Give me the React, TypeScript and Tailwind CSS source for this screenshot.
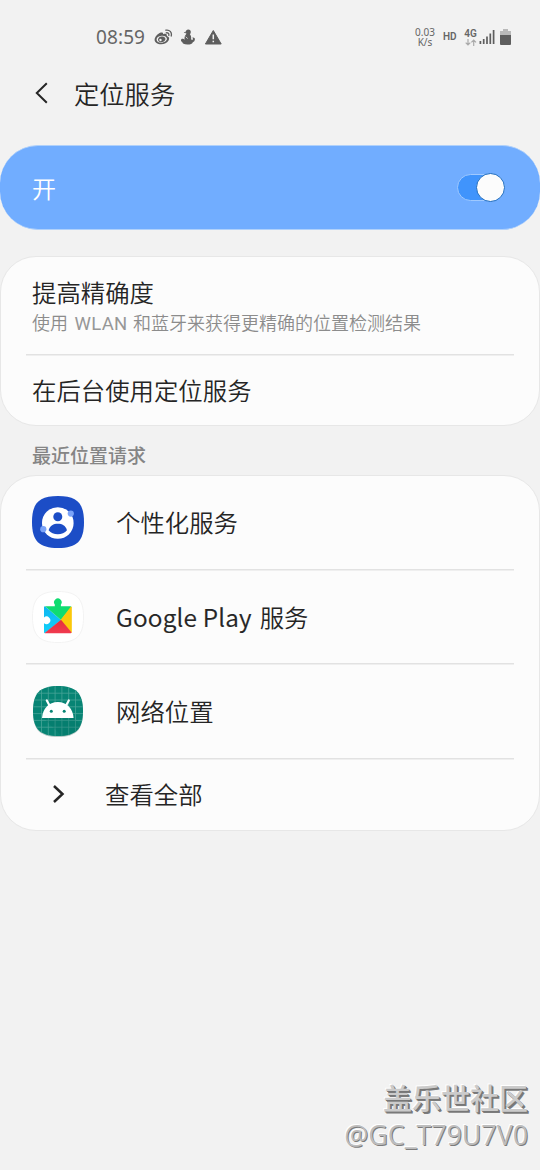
import { useState } from "react";
import type { ReactNode } from "react";

const ProfileIcon = () => (
  <svg width="52" height="52" viewBox="0 0 52 52">
    <path
      d="M26 0C45 0 52 7 52 26S45 52 26 52 0 45 0 26 7 0 26 0Z"
      fill="#1c4dc6"
    />
    <circle cx="25.800" cy="27" r="15.800" fill="#fff" />
    <circle cx="25.800" cy="20.800" r="4.500" fill="#1c4dc6" />
    <path
      d="M16.600 34.200C18.200 29.600 21.400 27.800 25.800 27.800S33.400 29.600 35 34.200C32.800 37 29.600 38.300 25.800 38.300S18.800 37 16.600 34.200Z"
      fill="#1c4dc6"
    />
    <circle cx="38.800" cy="17.600" r="3.100" fill="#7ba3f8" />
    <circle cx="11.300" cy="33.200" r="3.100" fill="#7ba3f8" />
  </svg>
);

const PlayServicesIcon = () => (
  <svg width="52" height="52" viewBox="0 0 52 52">
    <defs>
      <linearGradient id="playBlue" x1="0" y1="0" x2="0" y2="1">
        <stop offset="0" stopColor="#0fb5f0" />
        <stop offset="1" stopColor="#10d2fa" />
      </linearGradient>
      <linearGradient id="playRed" x1="0" y1="0" x2="0" y2="1">
        <stop offset="0" stopColor="#e32d3c" />
        <stop offset="1" stopColor="#f13b50" />
      </linearGradient>
    </defs>
    <path
      d="M26 .5C44.500 .5 51.500 7.500 51.500 26S44.500 51.500 26 51.500 .5 44.500 .5 26 7.500 .5 26 .5Z"
      fill="#fff"
      stroke="#f3f3f3"
    />
    <path
      d="M13 15.300L29 29L13 42.300Q12 42.300 12 41.300V32.200A3.800 3.800 0 1 0 12 26.400V16.300Q12 15.300 13 15.300Z"
      fill="url(#playBlue)"
    />
    <path
      d="M13 15.300H22.800V13.500A3.800 3.800 0 1 1 28.900 13.500V15.300H38.600L39.400 16L29 29Z"
      fill="#0fdc70"
    />
    <path d="M39 15.500Q39.800 15.700 39.800 16.300V41.300L39 42L28.500 29Z" fill="#fbc80a" />
    <path d="M29 28.800L39.600 41.600Q39.300 42.300 38.600 42.300H13.100L12.700 42Z" fill="url(#playRed)" />
  </svg>
);

const AndroidIcon = () => (
  <svg width="52" height="52" viewBox="0 0 52 52">
    <defs>
      <clipPath id="androidClip">
        <path d="M26 1C44 1 51 8 51 26S44 51 26 51 1 44 1 26 8 1 26 1Z" />
      </clipPath>
    </defs>
    <path
      d="M26 2C44 2 51 9 51 27S44 52 26 52 1 45 1 27 8 2 26 2Z"
      fill="#b7cbc8"
    />
    <g clipPath="url(#androidClip)">
      <rect width="52" height="52" fill="#078474" />
      <path
        d="M9.500 0V52M16.300 0V52M23.100 0V52M29.900 0V52M36.700 0V52M43.500 0V52M0 8.200H52M0 15H52M0 21.800H52M0 28.600H52M0 35.400H52M0 42.200H52"
        stroke="#48a598"
        strokeWidth=".8"
      />
      <path d="M11 32.500H41L50 42V52H31Z" fill="#006b5e" opacity=".25" />
    </g>
    <path
      d="M17.800 21L14.800 15.400M33.800 21L36.800 15.400"
      fill="none"
      stroke="#fff"
      strokeWidth="2.200"
      strokeLinecap="round"
    />
    <path
      d="M10 32.900C10.700 23.500 16.800 17 25.800 17S40.900 23.500 41.600 32.900Z"
      fill="#fff"
    />
    <circle cx="19.300" cy="26.200" r="1.500" fill="#078474" />
    <circle cx="32.200" cy="26.200" r="1.500" fill="#078474" />
  </svg>
);

const StatusBar = () => (
  <div className="flex h-[74px] items-center font-normal text-[#666]">
    <span className="ml-24 w-[50px] font-['Noto_Sans'] text-[19px] leading-[26px] tracking-[0.1px]">
      08:59
    </span>
    {/* Weibo */}
    <svg className="ml-2" width="19" height="17" viewBox="0 0 19 17" fill="none">
      <path
        fillRule="evenodd"
        d="M6.800 3.600C8.300 3 9.400 3.700 9 5.200C11.500 4.300 13.400 5 12.800 7.100C15 7.800 15.700 9.300 14.700 11.300C13.300 13.900 10.400 15.300 7.100 15.300C3.300 15.300.6 13.400.6 10.800C.6 8.200 3.700 4.700 6.800 3.600ZM7.500 6.700C4.500 7 2.400 8.600 2.600 10.700S5.100 14 8 13.700S13.100 11.600 12.900 9.600S10.300 6.400 7.500 6.700Z"
        fill="#5e5e5e"
      />
      <path
        fillRule="evenodd"
        d="M7.500 7.500C10.300 7.200 11.800 8.700 11.400 10.500S8.500 13.600 6.500 13.200S3.500 11.200 4.200 9.700S6.200 7.700 7.500 7.500ZM6.400 9.800A1.200 1.200 0 1 0 6.500 12.200A1.200 1.200 0 0 0 6.400 9.800Z"
        fill="#5e5e5e"
      />
      <path
        d="M11.800 1.200C15.500.5 18.200 3.200 17.200 7M12.200 3.800C14 3.500 15.200 4.700 14.800 6.300"
        stroke="#5e5e5e"
        strokeWidth="1.300"
        strokeLinecap="round"
      />
    </svg>
    <svg className="ml-[7px]" width="16" height="17" viewBox="0 0 16 17" fill="#5e5e5e">
      <circle cx="8.300" cy="3" r="2.500" />
      <path d="M5.600 2.600L3.700 3.700L6 4.300ZM6.300 5H9.800C11 6.500 11.400 8 11.100 10.300C12 11.400 12.700 11.100 13 9.700L12.300 8.800C13.300 7.900 15 8.700 14.900 10.300C14.800 12 14 12.800 12.800 13.300C12.500 15 10.500 15.600 7.400 15.600C4 15.600 2.200 14.700 2.300 13.100C.8 12.500.6 10.900 1.500 10C2.700 9.200 3.800 9.800 4.700 10.800C4 8.700 4.800 6.700 6.300 5Z" />
      <path d="M5.800 7.700L7.600 9.600" stroke="#f2f2f2" strokeWidth=".8" />
    </svg>
    <svg className="ml-2" width="19" height="17" viewBox="0 0 19 17">
      <path d="M9.300 1.500L17.200 15H1.400Z" fill="#5e5e5e" stroke="#5e5e5e" strokeLinejoin="round" />
      <path d="M9.300 5.500V10.300M9.300 11.700V13.300" stroke="#f2f2f2" strokeWidth="1.500" />
    </svg>

    <div className="ml-auto w-[22px] text-center font-['Noto_Sans'] text-[10px] leading-[10px]">
      <div>0.03</div>
      <div>K/s</div>
    </div>
    <span className="ml-[7px] w-[14px] font-['Roboto'] text-[10px] leading-3 font-semibold">
      HD
    </span>
    <div className="ml-[7px] flex w-[13px] flex-col items-center">
      <span className="font-['Roboto'] text-[10px] leading-[10px] font-semibold">4G</span>
      <svg width="12" height="7" viewBox="0 0 12 7" fill="none" stroke="#aaa" strokeWidth="1.200">
        <path d="M3 0V6M.7 3.700L3 6L5.300 3.700M8.700 7V1M6.400 3.300L8.700 1L11 3.300" />
      </svg>
    </div>
    <svg className="ml-[2px]" width="16" height="16" viewBox="0 0 16 16" stroke="#5e5e5e" strokeWidth="1.700">
      <path d="M1.400 15V12M4.700 15V10M8 15V7.500M11.300 15V4.500M14.600 15V1" />
    </svg>
    <svg className="mr-[29px] ml-[5px]" width="11" height="16" viewBox="0 0 11 16">
      <path d="M3 0H8V2H11V7H0V2H3Z" fill="#b9b9b9" />
      <path d="M0 6H11V15Q11 16 10 16H1Q0 16 0 15Z" fill="#5e5e5e" />
    </svg>
  </div>
);

const Divider = () => (
  <div className="mx-[25px] h-[2px] shrink-0 border-t border-[#e2e2e2] bg-[#efefef]" />
);

interface AppRowProps {
  icon: ReactNode;
  name: ReactNode;
}

const AppRow = ({ icon, name }: AppRowProps) => (
  <div className="flex h-[92.500px] items-center pl-[31px]">
    {icon}
    <span className="ml-8 text-[24.400px] leading-9">{name}</span>
  </div>
);

export default function App() {
  const [enabled, setEnabled] = useState(true);

  return (
    <div className="flex h-[1170px] w-[540px] flex-col overflow-hidden bg-[#f2f2f2] font-['Noto_Sans_CJK_SC',sans-serif] font-[350] text-[#252525]">
      <StatusBar />

      {/* Title */}
      <div className="flex h-[38px] items-center">
        <svg className="ml-[34px]" width="15" height="22" viewBox="0 0 15 22">
          <path d="M12.800 1.300L2.800 11L12.800 20.700" fill="none" stroke="#252525" strokeWidth="2" />
        </svg>
        <h1 className="ml-[25px] pb-px text-[25.300px] leading-[38px]">定位服务</h1>
      </div>

      {/* Main switch */}
      <div className="mt-[33px] flex h-[85px] shrink-0 items-center rounded-[38px] border-y border-[#b0d1fb] bg-[#71adff] pr-[35px] pl-8">
        <span className="text-[24px] leading-9 text-white">开</span>
        <button
          className="ml-auto flex h-[27px] w-[48px] items-center justify-end rounded-full border border-[#9fc9ff] bg-[#4094fc]"
          onClick={() => setEnabled(!enabled)}
        >
          <span className="-mr-px h-[29px] w-[29px] shrink-0 rounded-full border border-[#1b6bc0] bg-[#fcfcfc]" />
        </button>
      </div>

      <div className="mt-[26px] h-[170px] shrink-0 rounded-[36px] border border-[#e7e7e7] bg-[#fcfcfc]">
        <div className="flex h-[97px] flex-col pt-[17px] pl-[31px]">
          <span className="text-[24.400px] leading-9">提高精确度</span>
          <span className="text-[18px] leading-[25px] whitespace-nowrap text-[#8c8c8c]">
            使用
            <span className="mr-1 ml-[5px] inline-block w-[56px] text-center font-['Roboto'] text-[18.500px] font-normal tracking-[0.300px] text-[#979797]">
              WLAN
            </span>
            和蓝牙来获得更精确的位置检测结果
          </span>
        </div>
        <Divider />
        <div className="flex h-[69px] items-center pb-px pl-[31px]">
          <span className="text-[24.400px] leading-9">在后台使用定位服务</span>
        </div>
      </div>

      <h2 className="h-[49px] shrink-0 pt-[15px] pl-8 text-[19px] leading-7 font-medium text-[#858585]">
        最近位置请求
      </h2>

      <div className="h-[356px] shrink-0 rounded-[36px] border border-[#e7e7e7] bg-[#fcfcfc]">
        <AppRow icon={<ProfileIcon />} name="个性化服务" />
        <Divider />
        <AppRow
          icon={<PlayServicesIcon />}
          name={
            <>
              <span className="mr-2 tracking-[0.200px] [-webkit-text-stroke:0.2px_#252525]">
                Google Play
              </span>
              服务
            </>
          }
        />
        <Divider />
        <AppRow icon={<AndroidIcon />} name="网络位置" />
        <Divider />
        <div className="flex h-[70px] items-center pb-px">
          <svg className="ml-[51px]" width="13" height="20" viewBox="0 0 13 20">
            <path d="M2 2L10.500 10L2 18" fill="none" stroke="#252525" strokeWidth="2.500" />
          </svg>
          <span className="ml-10 text-[24.400px] leading-9">查看全部</span>
        </div>
      </div>

      <div className="mt-auto mr-[12px] flex flex-col items-end pb-[17px] [text-shadow:1px_1px_0_#7c7c7c,-1px_-1px_0_#fff]">
        <span className="text-[29px] leading-[40px] font-medium text-[#cbcbcb] [text-shadow:1px_1px_0_#777,2px_2px_0_#7c7c7c,-1px_-1px_0_#fff]">
          盖乐世社区
        </span>
        <span className="font-['Open_Sans'] text-[26.800px] leading-9 font-normal text-[#bdbdbd]">
          @GC_T79U7V0
        </span>
      </div>
    </div>
  );
}
